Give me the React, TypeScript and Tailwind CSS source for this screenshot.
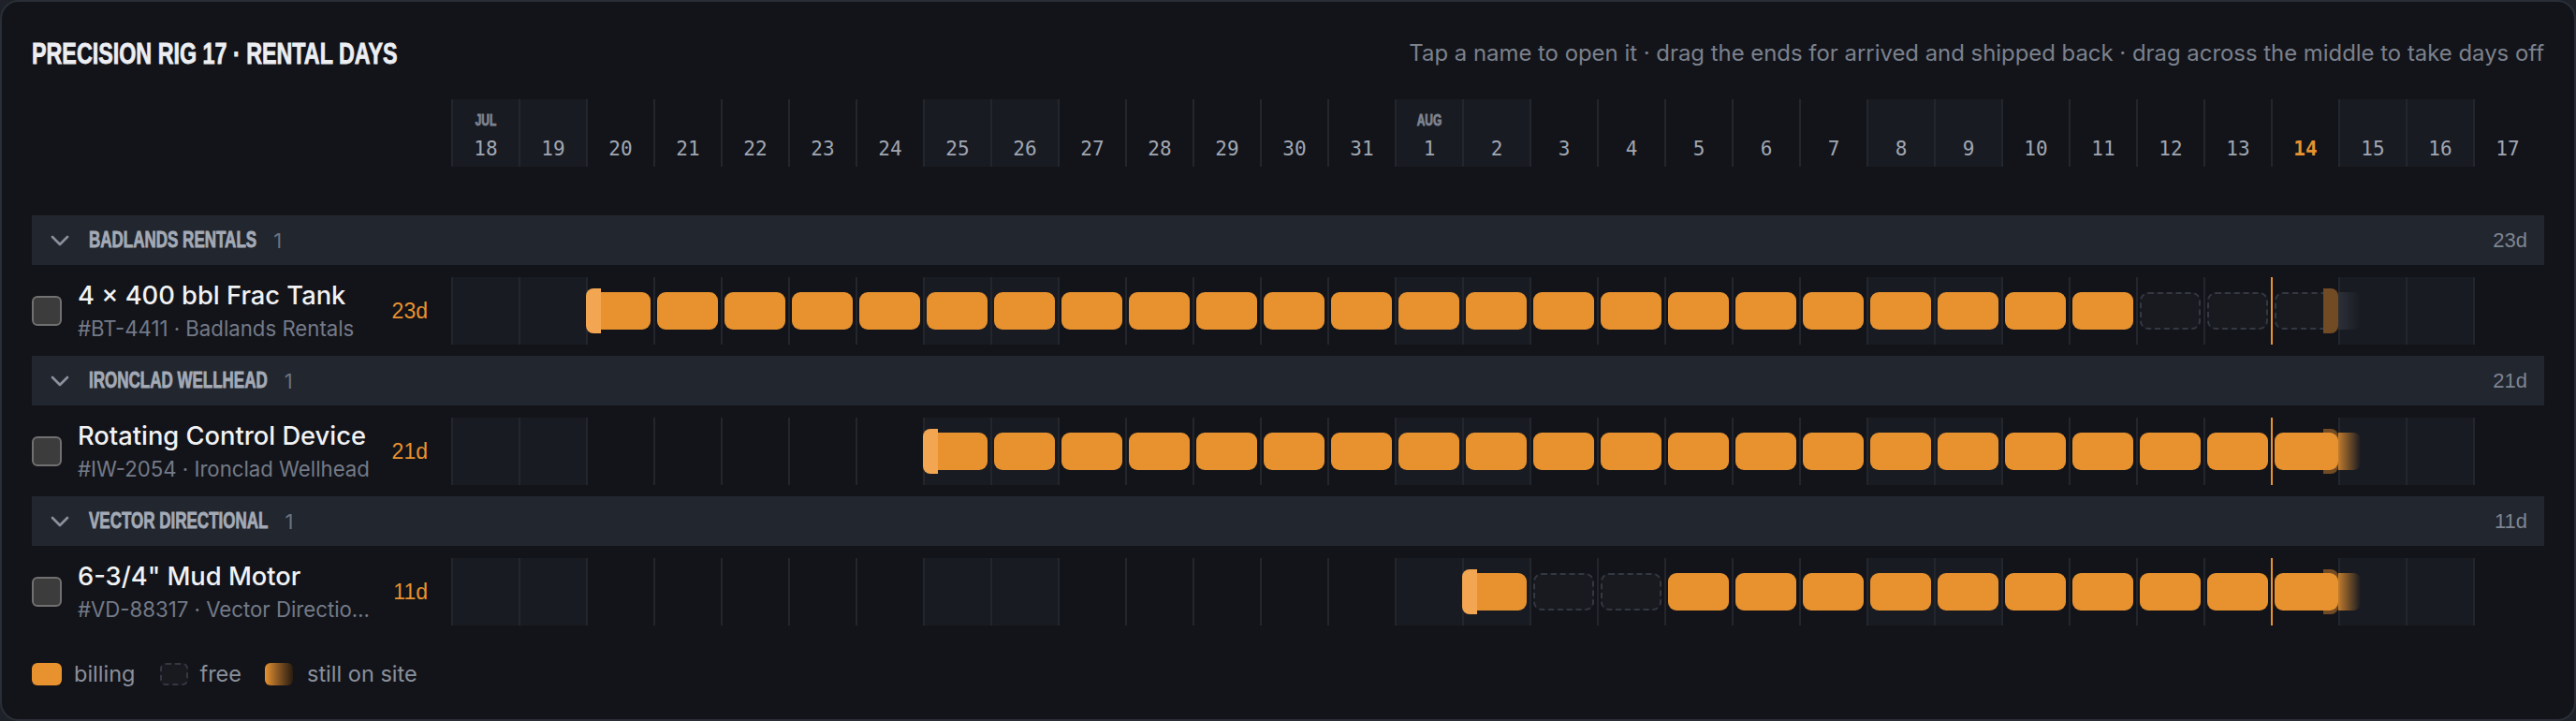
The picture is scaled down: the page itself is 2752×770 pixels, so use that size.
import clsx from "clsx"
import { ChevronDown } from "lucide-react"

interface Rental {
    id: string
    group: string
    name: string
    tag: string
    start: number
    end: number
    free: number[]
}

const rentals: Rental[] = [
    { id: 'BT-4411', group: 'Badlands Rentals', name: '4 × 400 bbl Frac Tank', tag: '#BT-4411 · Badlands Rentals', start: 2, end: 27, free: [25, 26, 27] },
    { id: 'IW-2054', group: 'Ironclad Wellhead', name: 'Rotating Control Device', tag: '#IW-2054 · Ironclad Wellhead', start: 7, end: 27, free: [] },
    { id: 'VD-88317', group: 'Vector Directional', name: '6-3/4" Mud Motor', tag: '#VD-88317 · Vector Directional', start: 15, end: 27, free: [16, 17] },
]

// Jul 18 → Aug 17, today is Aug 14
const days = Array.from({ length: 31 }, (_, i) => ({
    day: i >= 14 ? i - 13 : 18 + i,
    month: i === 0 ? 'JUL' : i === 14 ? 'AUG' : '',
    weekend: i % 7 === 0 || i % 7 === 1,
    today: i === 27,
}))

// tall, heavy caps for headings
const display = "font-['Liberation_Sans',Arial,sans-serif] font-bold [-webkit-text-stroke:0.6px_currentcolor]"
const sans = "font-['Inter','Noto_Sans',sans-serif]"
const narrow = "font-['Liberation_Sans',Arial,sans-serif]"

function billedDays(r: Rental) {
    return r.end - r.start + 1 - r.free.length
}

function DayCell({ index, rental }: { index: number, rental: Rental }) {
    const info = days[index]
    const inRange = index >= rental.start && index <= rental.end
    const kind = !inRange ? null : rental.free.includes(index) ? 'free' : 'billing'
    const isStart = index === rental.start
    const isEnd = index === rental.end

    return (
        <div className={clsx(
            'relative flex h-[72px] w-[72px] shrink-0 items-center border-l-2 border-[#23262d]',
            info.weekend && 'bg-[#191b22]',
            kind && (isStart ? 'pr-[3px]' : isEnd ? 'pl-[2px]' : 'pl-[2px] pr-[3px]'),
        )}>
            {kind === 'billing' && <div className="relative z-10 h-[40px] flex-1 rounded-[9px] bg-[#e8922f]" />}
            {kind === 'free' && <div className="relative h-[40px] flex-1 rounded-[9px] border-2 border-dashed border-[#343842] bg-[#181a20]" />}

            {isStart && (
                <div className="absolute -left-[2px] top-[12px] z-20 h-[48px] w-[16px] rounded-l-[8px] bg-[#f2a651]" />
            )}
            {isEnd && (
                <>
                    <div className="absolute right-0 top-[12px] z-0 h-[48px] w-[16px] rounded-r-[8px] bg-[#714b24]" />
                    <div className={clsx(
                        'absolute left-full top-[16px] z-10 h-[40px] w-[24px] rounded-r-[8px] bg-linear-to-r to-transparent',
                        kind === 'billing' ? 'from-[#e8922f]/80' : 'from-[#2c3038]',
                    )} />
                </>
            )}

            {info.today && <div className="absolute inset-y-0 -left-[2px] z-30 w-[2px] bg-[#e8922f]" />}
        </div>
    )
}

function RentalGroup({ rental, first }: { rental: Rental, first: boolean }) {
    const count = billedDays(rental)

    return (
        <section>
            <div className={clsx('flex h-[53px] items-center bg-[#22262e] pl-[14px] pr-[18px]', first ? 'mt-[52px]' : 'mt-[12px]')}>
                <ChevronDown size={32} strokeWidth={2} color="#8a909c" />
                <span className={clsx(display, 'ml-[15px] inline-block text-[17px] uppercase leading-[20px] text-[#a3aab6] [transform:scaleY(1.4)]')}>
                    {rental.group}
                </span>
                <span className={clsx(sans, 'ml-[18px] text-[22px] leading-[24px] text-[#6b7280]')}>1</span>
                <span className={clsx(narrow, 'ml-auto text-[22px] text-[#7d8491]')}>{count}d</span>
            </div>

            <div className="mt-[13px] flex h-[72px]">
                <div className="flex w-[448px] shrink-0 items-center">
                    <div className="h-[32px] w-[32px] shrink-0 rounded-[6px] border-2 border-[#707070] bg-[#3c3c3c]" />
                    <div className={clsx(sans, 'ml-[17px] flex w-[314px] min-w-0 flex-col gap-[5px]')}>
                        <span className="whitespace-nowrap text-[27.3px] font-medium leading-[32px] text-[#f1f2f4]">{rental.name}</span>
                        <span className="truncate text-[22.2px] leading-[28px] text-[#737a88]">{rental.tag}</span>
                    </div>
                    <span className={clsx(narrow, 'ml-auto pr-[25px] text-[23px] text-[#e8922f]')}>{count}d</span>
                </div>
                <div className="flex">
                    {days.map((_, i) => <DayCell key={i} index={i} rental={rental} />)}
                </div>
            </div>
        </section>
    )
}

export default function App() {
    return (
        <div className="h-[770px] w-full bg-[#1e2128]">
            <div className="box-border h-[770px] w-full rounded-[20px] border-2 border-[#2a2e36] bg-[#131419] px-[32px] pt-[40px]">
                <header className="flex items-center justify-between">
                    <h1 className={clsx(display, 'inline-block text-[23.3px] uppercase leading-[30px] text-[#eceef2] [transform:scaleY(1.33)]')}>
                        Precision Rig 17 · Rental Days
                    </h1>
                    <p className={clsx(sans, 'text-[23.9px] leading-[30px] text-[#7b818d]')}>
                        Tap a name to open it · drag the ends for arrived and shipped back · drag across the middle to take days off
                    </p>
                </header>

                <div className="mt-[34px] flex">
                    <div className="w-[448px] shrink-0" />
                    <div className="flex h-[72px]">
                        {days.map((d, i) => (
                            <div key={i} className={clsx('flex w-[72px] shrink-0 flex-col items-center border-l-2 border-[#23262d]', d.weekend && 'bg-[#191b22]')}>
                                <div className="mt-[8px] h-[16px]">
                                    <span className={clsx(display, 'inline-block text-[12px] leading-[16px] text-[#7d8491] [transform:scaleY(1.4)]')}>{d.month}</span>
                                </div>
                                <span className={clsx(
                                    "mt-[17px] font-['DejaVu_Sans_Mono',monospace] text-[21px] leading-[24px]",
                                    d.today ? 'font-bold text-[#e8922f]' : 'text-[#a0a7b3]',
                                )}>
                                    {d.day}
                                </span>
                            </div>
                        ))}
                    </div>
                </div>

                {rentals.map((r, i) => <RentalGroup key={r.id} rental={r} first={i === 0} />)}

                <div className={clsx(sans, 'mt-[40px] flex h-[24px] items-center text-[23.5px] leading-[24px] text-[#8a909c]')}>
                    <span className="h-[24px] w-[32px] rounded-[6px] bg-[#e8922f]" />
                    <span className="ml-[13px]">billing</span>
                    <span className="ml-[27px] h-[24px] w-[30px] rounded-[6px] border-2 border-dashed border-[#343842] bg-[#181a20]" />
                    <span className="ml-[12px]">free</span>
                    <span className="ml-[25px] h-[24px] w-[30px] rounded-[6px] bg-linear-to-r from-[#e8922f] to-[#2a1d10]" />
                    <span className="ml-[15px]">still on site</span>
                </div>
            </div>
        </div>
    )
}
